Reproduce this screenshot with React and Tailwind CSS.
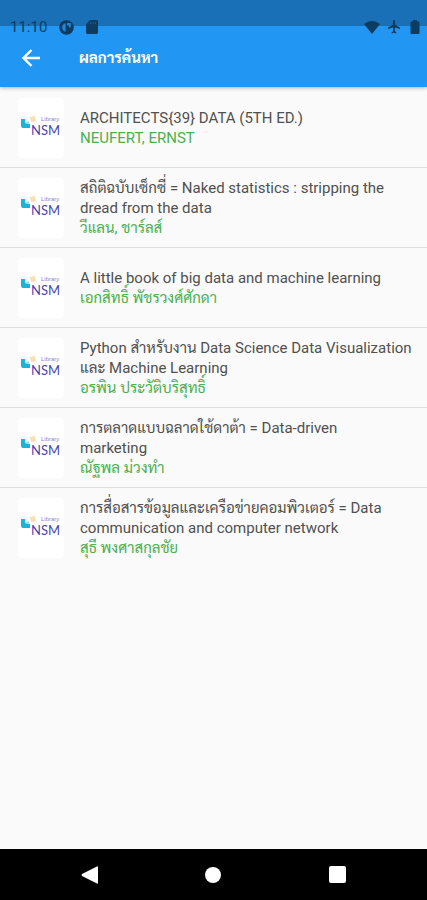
const books = [
  { title: "ARCHITECTS{39} DATA (5TH ED.)", author: "NEUFERT, ERNST" },
  { title: "สถิติฉบับเซ็กซี่ = Naked statistics : stripping the dread from the data", author: "วีแลน, ชาร์ลส์" },
  { title: "A little book of big data and machine learning", author: "เอกสิทธิ์ พัชรวงศ์ศักดา" },
  { title: "Python สำหรับงาน Data Science Data Visualization และ Machine Learning", author: "อรพิน ประวัติบริสุทธิ์" },
  { title: "การตลาดแบบฉลาดใช้ดาต้า = Data-driven\nmarketing", author: "ณัฐพล ม่วงทำ" },
  { title: "การสื่อสารข้อมูลและเครือข่ายคอมพิวเตอร์ = Data communication and computer network", author: "สุธี พงศาสกุลชัย" },
];

const StatusBar = () => (
  <div className="relative flex items-center justify-between pt-[17px] pl-[10px] pr-[5px] text-[#0d3c61]">
    <div className="flex items-center gap-3">
      <span className="font-['Roboto',sans-serif] text-[15px] leading-5">11:10</span>
      <svg className="size-[15px]" viewBox="0 0 15 15" aria-hidden="true">
        <circle cx="7.5" cy="7.5" r="7.3" fill="currentColor" />
        <path d="M6.6 3.2A4.4 4.4 0 0 0 6.6 11.8Z" fill="#2185d8" />
        <path d="M8 3H11.8V7.4H10V5.6H8Z" fill="#2185d8" />
      </svg>
      <svg className="h-[14px] w-3" viewBox="0 0 12 14" aria-hidden="true">
        <path d="M4.2 0H10.6Q12 0 12 1.4V12.6Q12 14 10.6 14H1.4Q0 14 0 12.6V4.2Z" fill="currentColor" />
        <path d="M4.6 2V4.2M7 2V4.2M9.4 2V4.2" stroke="#1a5c92" strokeWidth="1" />
      </svg>
    </div>
    <div className="flex items-center gap-[7px]">
      <svg className="h-[13px] w-4" viewBox="0 0 16 13" aria-hidden="true">
        <path d="M8 13L0 3Q8 -3 16 3Z" fill="currentColor" />
      </svg>
      <svg className="size-[14px]" viewBox="0 0 14 14" aria-hidden="true">
        <path d="M13 9V7.7L8 4.5V1Q8 0 7 0T6 1V4.5L1 7.7V9L6 7.4V11.2L4.6 12.4V13.5L7 12.8L9.4 13.5V12.4L8 11.2V7.4Z" fill="currentColor" />
      </svg>
      <svg className="size-[14px]" viewBox="0 0 14 14" aria-hidden="true">
        <path d="M5 0H9V1.4H10.4Q11.5 1.4 11.5 2.5V13Q11.5 14 10.4 14H3.6Q2.5 14 2.5 13V2.5Q2.5 1.4 3.6 1.4H5Z" fill="currentColor" />
      </svg>
    </div>
  </div>
);

const LibraryLogo = () => (
  <div className="flex h-[60px] w-[46px] shrink-0 items-center justify-center rounded-sm bg-white">
    <svg className="h-6 w-10" viewBox="0 0 40 24" role="img" aria-label="Library NSM">
      <path d="M0 3H4V7L9 8V12H2Q0 12 0 10Z" fill="#19b5d8" />
      <path d="M4.5 5.5H8V8L4.5 7Z" fill="#a5dff0" />
      <path d="M8.5 1L14 0L15 5L10.5 6.5Z" fill="#fbdfb4" />
      <text x="20" y="5" fontSize="6" fill="#8f80cf" fontFamily="Liberation Sans, sans-serif">Library</text>
      <text x="10" y="19" fontSize="13" fill="#4b3fae" fontFamily="Lato, sans-serif">NSM</text>
    </svg>
  </div>
);

const App = () => {
  return (
    <div className="flex min-h-screen flex-col bg-[#fafafa] font-['Roboto','Sarabun','Noto_Sans_Thai_Looped','Noto_Looped_Thai','Loma','Noto_Serif_Thai',sans-serif]">
      <header className="relative bg-[#2196f3] shadow-[0_1px_4px_rgba(0,0,0,0.3)]">
        <div className="absolute inset-x-0 top-0 h-[26px] bg-[#1a70b6]" />
        <StatusBar />
        <div className="flex h-[50px] items-center gap-9 pb-2 pl-[19px]">
          <button aria-label="Back" className="text-white">
            <svg className="size-6" viewBox="0 0 24 24" fill="none" stroke="currentColor" strokeWidth="2.4" aria-hidden="true">
              <path d="M21 12H5M12.5 4L4.5 12L12.5 20" />
            </svg>
          </button>
          <h1 className="text-[15px] leading-5 font-bold text-white">ผลการค้นหา</h1>
        </div>
      </header>

      <main className="flex-1 pt-px">
        <ul className="divide-y divide-[#dedede]">
          {books.map((book) => (
            <li key={book.title} className="flex min-h-20 items-center gap-4 pr-3 pl-[18px]">
              <LibraryLogo />
              <div className="min-w-0 text-[15px] leading-5">
                <p className="whitespace-pre-line text-[#505050]">{book.title}</p>
                <p className="text-[#4caf50]">{book.author}</p>
              </div>
            </li>
          ))}
        </ul>
      </main>

      <nav className="grid h-[51px] grid-cols-3 place-items-center bg-black px-7">
        <button aria-label="Back">
          <svg className="size-5" viewBox="0 0 20 20" fill="#fff" aria-hidden="true">
            <path d="M17 1.5Q18 1 18 2V18Q18 19 17 18.5L2 11Q1 10 2 9Z" />
          </svg>
        </button>
        <button aria-label="Home" className="size-4 rounded-full bg-white" />
        <button aria-label="Recent apps" className="size-[17px] rounded-xs bg-white" />
      </nav>
    </div>
  );
};

export default App;
